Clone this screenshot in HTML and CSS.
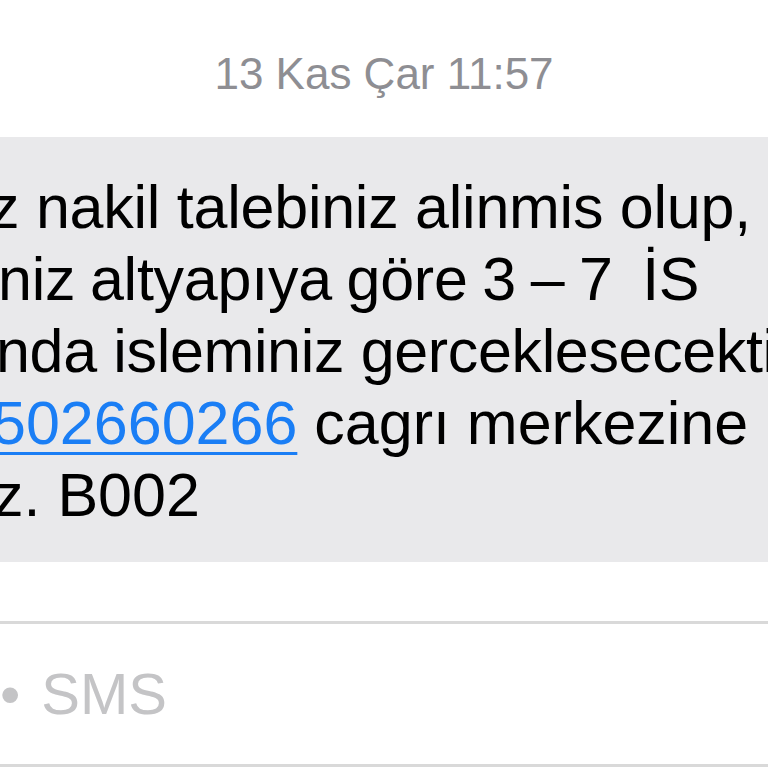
FILE: index.html
```html
<!DOCTYPE html>
<html lang="tr">
<head>
    <meta charset="UTF-8">
    <meta name="viewport" content="width=device-width, initial-scale=1.0">
    <title>Mesajlar</title>
    <link rel="stylesheet" href="styles.css">
</head>
<body>
    <div class="screen">
        <div class="stamp">13 Kas Çar 11:57</div>
        <div class="bubble">
            <div class="line l1">z nakil talebiniz alinmis olup,</div>
            <div class="line l2">niz altyapıya göre 3 – 7 &nbsp;İS</div>
            <div class="line l3">nda isleminiz gerceklesecektir.</div>
            <div class="line l4"><a href="#" class="phone">502660266</a> cagrı merkezine</div>
            <div class="line l5">z. B002</div>
        </div>
        <div class="composer">
            <div class="placeholder"><span class="dot">•</span>SMS</div>
        </div>
    </div>
</body>
</html>
```

FILE: styles.css
```css
html, body {
    margin: 0;
    padding: 0;
    background: #ffffff;
}
.screen {
    width: 768px;
    height: 768px;
    overflow: hidden;
    font-family: 'Liberation Sans', Arial, sans-serif;
}
.stamp {
    height: 137px;
    box-sizing: border-box;
    padding-top: 49px;
    text-align: center;
    font-size: 44px;
    line-height: 50px;
    color: #8e8e93;
}
.bubble {
    height: 425px;
    box-sizing: border-box;
    padding-top: 34px;
    background: #e9e9eb;
    color: #000000;
    font-size: 61px;
    line-height: 72px;
}
.line {
    white-space: nowrap;
    overflow: hidden;
}
.l1 { text-indent: -11px; letter-spacing: -0.25px; }
.l2 { text-indent: -2px; letter-spacing: -0.25px; word-spacing: -2px; }
.l3 { text-indent: -4px; letter-spacing: -0.35px; }
.l4 { text-indent: -8px; }
.l5 { text-indent: -7px; }
.phone {
    color: #1a7ef5;
    text-decoration: underline;
    text-decoration-thickness: 3px;
    text-underline-offset: 8px;
}
.composer {
    margin-top: 59px;
    height: 146px;
    box-sizing: border-box;
    border-top: 3px solid #d9d9d9;
    border-bottom: 3px solid #d9d9d9;
}
.placeholder {
    padding-top: 38px;
    font-size: 58px;
    line-height: 64px;
    color: #c4c4c6;
    white-space: nowrap;
}
.dot {
    display: inline-block;
    margin-left: 0;
    margin-right: 21px;
}
```
